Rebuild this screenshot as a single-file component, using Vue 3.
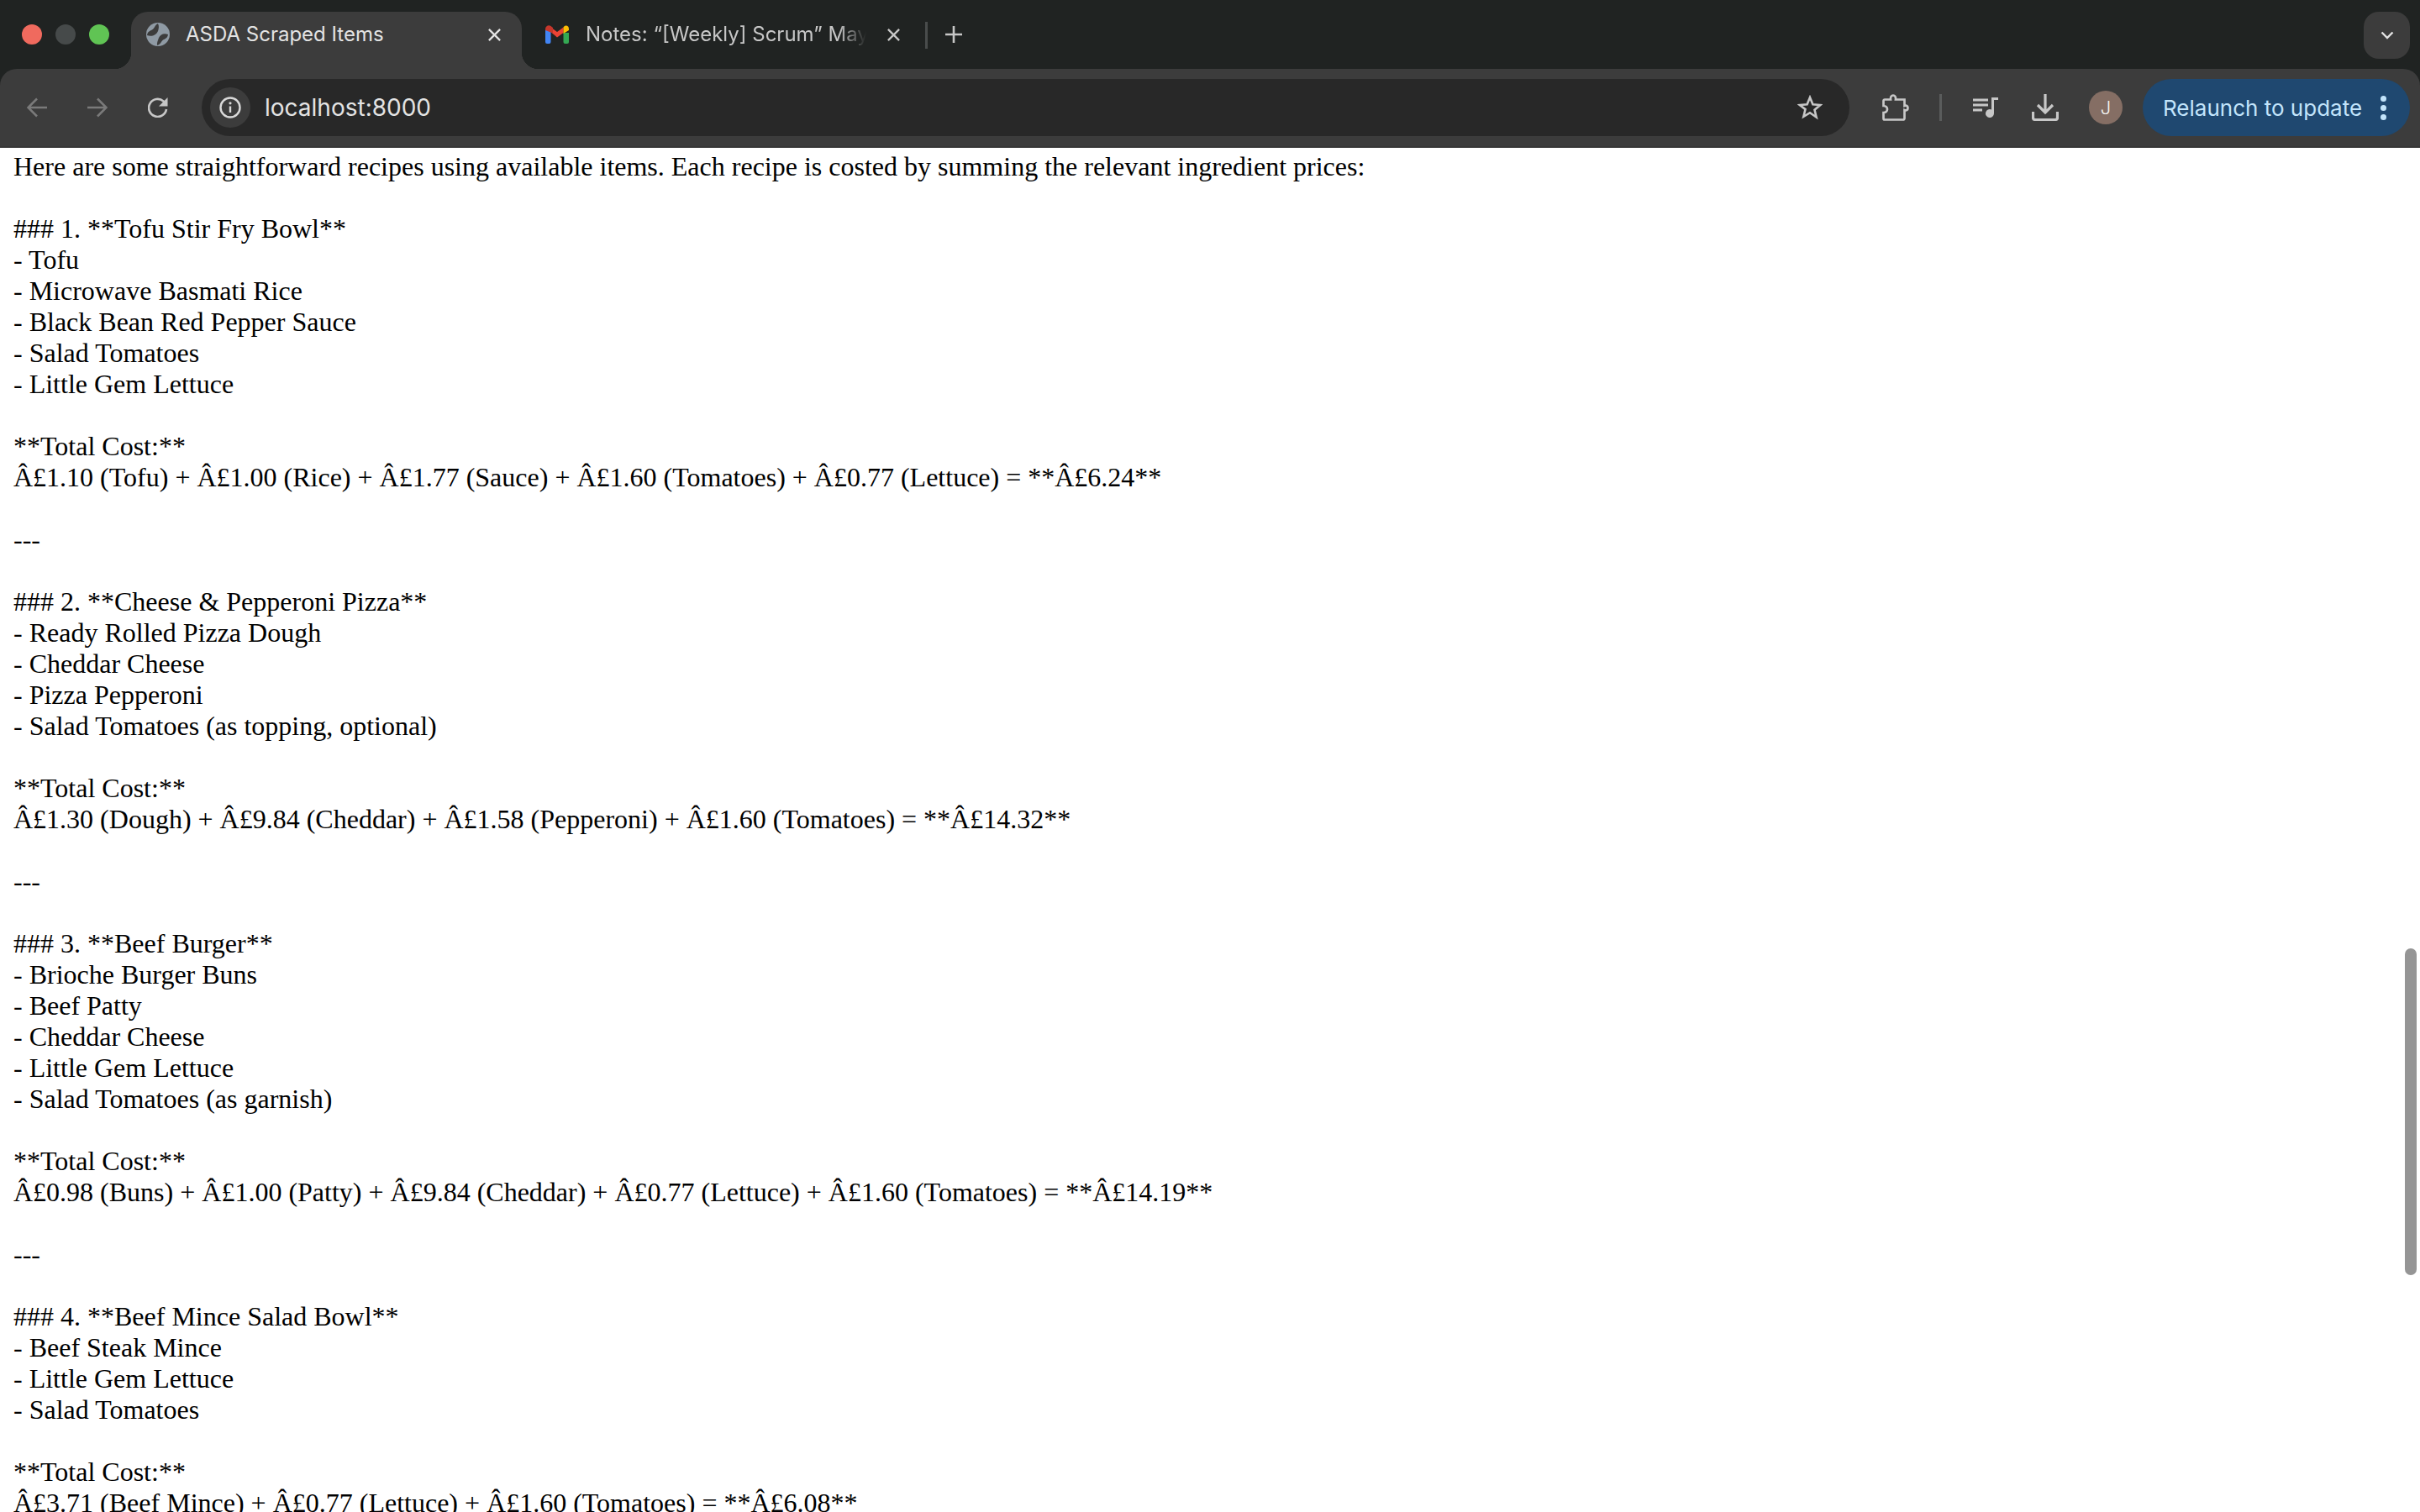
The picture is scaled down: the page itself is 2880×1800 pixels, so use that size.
<script setup>
const lines = `Here are some straightforward recipes using available items. Each recipe is costed by summing the relevant ingredient prices:

### 1. **Tofu Stir Fry Bowl**
- Tofu
- Microwave Basmati Rice
- Black Bean Red Pepper Sauce
- Salad Tomatoes
- Little Gem Lettuce

**Total Cost:**
Â£1.10 (Tofu) + Â£1.00 (Rice) + Â£1.77 (Sauce) + Â£1.60 (Tomatoes) + Â£0.77 (Lettuce) = **Â£6.24**

---

### 2. **Cheese & Pepperoni Pizza**
- Ready Rolled Pizza Dough
- Cheddar Cheese
- Pizza Pepperoni
- Salad Tomatoes (as topping, optional)

**Total Cost:**
Â£1.30 (Dough) + Â£9.84 (Cheddar) + Â£1.58 (Pepperoni) + Â£1.60 (Tomatoes) = **Â£14.32**

---

### 3. **Beef Burger**
- Brioche Burger Buns
- Beef Patty
- Cheddar Cheese
- Little Gem Lettuce
- Salad Tomatoes (as garnish)

**Total Cost:**
Â£0.98 (Buns) + Â£1.00 (Patty) + Â£9.84 (Cheddar) + Â£0.77 (Lettuce) + Â£1.60 (Tomatoes) = **Â£14.19**

---

### 4. **Beef Mince Salad Bowl**
- Beef Steak Mince
- Little Gem Lettuce
- Salad Tomatoes

**Total Cost:**
Â£3.71 (Beef Mince) + Â£0.77 (Lettuce) + Â£1.60 (Tomatoes) = **Â£6.08**`
</script>

<template>
  <div class="window">
    <header class="strip">
      <div class="lights">
        <span class="light red"></span>
        <span class="light grey"></span>
        <span class="light green"></span>
      </div>
      <div class="tab active">
        <svg class="fav" viewBox="0 0 28 28">
          <circle cx="14" cy="14" r="14" fill="#8f9aa4"/>
          <path d="M1 15C6 17 12 15 14 10C15 7 15.500 4 14 1C10 3 10 7 7 8.500C4 10 1.500 11 1 15z" fill="#3c3c3c"/>
          <path d="M26 14C21 12 17 14 15 18C14 21 12.500 24 13 27C17 26 18 22 20 20.500C23 19 25.500 18 26 14z" fill="#3c3c3c"/>
        </svg>
        <span class="tab-title">ASDA Scraped Items</span>
        <svg class="close" viewBox="0 0 18 18"><path d="M2 2l14 14M16 2L2 16" stroke="#e3e3e3" stroke-width="2.400" fill="none"/></svg>
      </div>
      <div class="tab idle">
        <svg class="gmail" viewBox="0 0 28 22">
          <path d="M0 5h6.500v15a2 2 0 0 1-2 2H2a2 2 0 0 1-2-2z" fill="#4285f4"/>
          <path d="M21.500 9h6.500v11a2 2 0 0 1-2 2h-2.500a2 2 0 0 1-2-2z" fill="#34a853"/>
          <path d="M6.500 8V2.500L14 8l7.500-5.500V9L14 14.500z" fill="#ea4335"/>
          <path d="M0 6V4.500C0 1 4-1 6.500 1L9 3v6.500L0 6z" fill="#c5372c"/>
          <path d="M21.500 2.500C24-1 28 .5 28 4.500V6l-6.500 4z" fill="#fbbc04"/>
        </svg>
        <span class="tab-title faded">Notes: “[Weekly] Scrum” May</span>
        <svg class="close" viewBox="0 0 18 18"><path d="M2 2l14 14M16 2L2 16" stroke="#c7c7c7" stroke-width="2.400" fill="none"/></svg>
      </div>
      <span class="tab-sep"></span>
      <svg class="plus" viewBox="0 0 20 20"><path d="M10 0v20M0 10h20" stroke="#c7c7c7" stroke-width="2.600" fill="none"/></svg>
      <span class="grow"></span>
      <div class="tab-search">
        <svg viewBox="0 0 16 10" class="chev"><path d="M1.500 1.500L8 8l6.500-6.500" stroke="#e3e3e3" stroke-width="2.400" fill="none"/></svg>
      </div>
    </header>

    <nav class="toolbar">
      <svg class="nav first" viewBox="0 0 24 24"><path d="M24 12H2M12 1.500L1.500 12 12 22.500" stroke="#7a7a7a" stroke-width="2.500" fill="none"/></svg>
      <svg class="nav" viewBox="0 0 24 24"><path d="M0 12h22M12 1.500L22.500 12 12 22.500" stroke="#7a7a7a" stroke-width="2.500" fill="none"/></svg>
      <svg class="nav" viewBox="0 0 24 24"><path d="M22 14A10.500 10.500 0 1 1 18.500 4.500L22 8" stroke="#c7c7c7" stroke-width="2.600" fill="none"/><path d="M23.500 0V10.500H13z" fill="#c7c7c7"/></svg>
      <div class="omnibox">
        <span class="chip">
          <svg viewBox="0 0 26 26" class="info"><circle cx="13" cy="13" r="11.500" stroke="#d9d9d9" stroke-width="2.400" fill="none"/><path d="M13 11.500v7.500" stroke="#d9d9d9" stroke-width="2.400"/><circle cx="13" cy="7.800" r="1.600" fill="#d9d9d9"/></svg>
        </span>
        <span class="url">localhost:8000</span>
        <span class="grow"></span>
        <svg class="star" viewBox="0 0 30 30"><path d="M15 3l3.400 8.300 8.900.7-6.800 5.800 2.100 8.700L15 21.200l-7.600 4.600 2.100-8.700L2.700 12l8.900-.7z" stroke="#c7c7c7" stroke-width="2.600" fill="none"/></svg>
      </div>
      <svg class="ext" viewBox="0 0 32 32"><path d="M3 6.500H10C9.500 3.500 11 1.500 13 1.500S16.500 3.500 16 6.500H26.500V14C29 13 30.500 14.500 30.500 16.500S29 20 26.500 19V29a1.500 1.500 0 0 1-1.500 1.500H3A1.500 1.500 0 0 1 1.500 29V22C4.500 22 6 20 6 18S4.500 14 1.500 14V8A1.500 1.500 0 0 1 3 6.500z" stroke="#c7c7c7" stroke-width="2.700" fill="none"/></svg>
      <span class="bar-sep"></span>
      <svg class="media" viewBox="0 0 30 24"><path d="M0 1.500h18v3H0zM0 7.500h18v3H0zM0 13.500h11v3H0z" fill="#c7c7c7"/><path d="M22 0h8v3h-5v16a5 5 0 1 1-3-4.500z" fill="#c7c7c7"/></svg>
      <svg class="dl" viewBox="0 0 32 32"><path d="M16 0v21M7 13l9 9 9-9" stroke="#c7c7c7" stroke-width="3.200" fill="none"/><path d="M1.500 21v7a2.500 2.500 0 0 0 2.500 2.500h24a2.500 2.500 0 0 0 2.500-2.500v-7" stroke="#c7c7c7" stroke-width="3.200" fill="none"/></svg>
      <span class="avatar">J</span>
      <div class="relaunch">
        <span class="re-text">Relaunch to update</span>
        <span class="dots"><i></i><i></i><i></i></span>
      </div>
    </nav>

    <main class="page">{{ lines }}</main>
    <div class="scrollbar"></div>
  </div>
</template>

<style scoped>
.window { width: 2880px; height: 1800px; display: flex; flex-direction: column; overflow: hidden; background: #202322; position: relative; }
.strip { height: 82px; background: #202322; display: flex; align-items: flex-end; padding-left: 26px; padding-right: 12px; box-sizing: border-box; font-family: Inter, "Liberation Sans", sans-serif; flex: none; }
.lights { display: flex; gap: 16px; align-self: flex-start; margin-top: 29px; margin-right: 26px; }
.light { width: 24px; height: 24px; border-radius: 50%; }
.red { background: #f06a5e; }
.grey { background: #464a4a; }
.green { background: #60c454; }
.tab { height: 68px; display: flex; align-items: center; box-sizing: border-box; position: relative; padding-bottom: 14px; flex: none; }
.active { width: 465px; background: #3c3c3c; border-radius: 20px 20px 0 0; padding-left: 18px; padding-right: 24px; color: #e3e3e3; }
.active::before, .active::after { content: ""; position: absolute; bottom: 0; width: 20px; height: 20px; }
.active::before { left: -20px; background: radial-gradient(circle at 0 0, #202322 20px, #3c3c3c 20.500px); }
.active::after { right: -20px; background: radial-gradient(circle at 100% 0, #202322 20px, #3c3c3c 20.500px); }
.idle { width: 473px; padding-left: 28px; padding-right: 22px; color: #c7c7c7; }
.fav { width: 28px; height: 28px; margin-right: 19px; flex: none; }
.gmail { width: 28px; height: 22px; margin-right: 20px; flex: none; }
.tab-title { font-size: 24px; line-height: 32px; white-space: nowrap; flex: 1; min-width: 0; }
.faded { -webkit-mask-image: linear-gradient(to right, #000 90%, transparent 100%); mask-image: linear-gradient(to right, #000 90%, transparent 100%); }
.close { width: 17px; height: 17px; flex: none; margin-left: 24px; }
.tab-sep { width: 3px; height: 32px; background: #494c4c; align-self: flex-start; margin-top: 26px; margin-left: 7px; flex: none; }
.plus { width: 20px; height: 20px; align-self: flex-start; margin-top: 31px; margin-left: 21px; flex: none; }
.grow { flex: 1; }
.tab-search { width: 55px; height: 56px; background: #3c3c3c; border-radius: 18px; align-self: flex-start; margin-top: 14px; display: flex; align-items: center; justify-content: center; flex: none; }
.chev { width: 16px; height: 10px; }
.toolbar { height: 94px; background: #3c3c3c; border-bottom: 2px solid #363636; box-sizing: border-box; display: flex; align-items: center; padding-left: 32px; padding-right: 12px; border-radius: 20px 20px 0 0; font-family: Inter, "Liberation Sans", sans-serif; flex: none; }
.nav { width: 24px; height: 24px; margin-right: 48px; flex: none; }
.omnibox { width: 1961px; height: 68px; margin-left: -8px; background: #282828; border-radius: 34px; display: flex; align-items: center; padding-left: 10px; padding-right: 32px; box-sizing: border-box; flex: none; }
.chip { width: 48px; height: 48px; border-radius: 50%; background: #3c3c3c; display: flex; align-items: center; justify-content: center; flex: none; }
.info { width: 26px; height: 26px; }
.url { margin-left: 17px; font-size: 28px; color: #e3e3e3; }
.star { width: 30px; height: 30px; flex: none; }
.ext { width: 32px; height: 32px; margin-left: 39px; flex: none; }
.bar-sep { width: 3px; height: 32px; background: #5a5c5c; margin-left: 36px; flex: none; }
.media { width: 30px; height: 24px; margin-left: 37px; flex: none; }
.dl { width: 32px; height: 32px; margin-left: 40px; flex: none; }
.avatar { width: 40px; height: 40px; border-radius: 50%; background: #856e64; color: #f2f2f2; font-size: 22px; font-weight: 300; display: flex; align-items: center; justify-content: center; margin-left: 36px; flex: none; }
.relaunch { width: 318px; height: 68px; background: #1f4870; border-radius: 34px; margin-left: 24px; display: flex; align-items: center; padding-left: 24px; box-sizing: border-box; color: #c2e4fb; flex: none; }
.re-text { font-size: 26px; white-space: nowrap; width: 259px; flex: none; }
.dots { display: flex; flex-direction: column; gap: 4px; }
.dots i { display: block; width: 7px; height: 7px; border-radius: 50%; background: #c2e4fb; }
.page { flex: 1; margin: 0; padding: 4px 16px 0; white-space: pre-wrap; font-family: "Liberation Serif", "Times New Roman", serif; font-size: 32px; line-height: 37px; color: #000; background: #fff; overflow: hidden; }
.scrollbar { position: absolute; left: 2862px; top: 1129px; width: 14px; height: 389px; border-radius: 7px; background: #959595; }
</style>

<style>
html, body { margin: 0; overflow: hidden; background: #fff; }
</style>
